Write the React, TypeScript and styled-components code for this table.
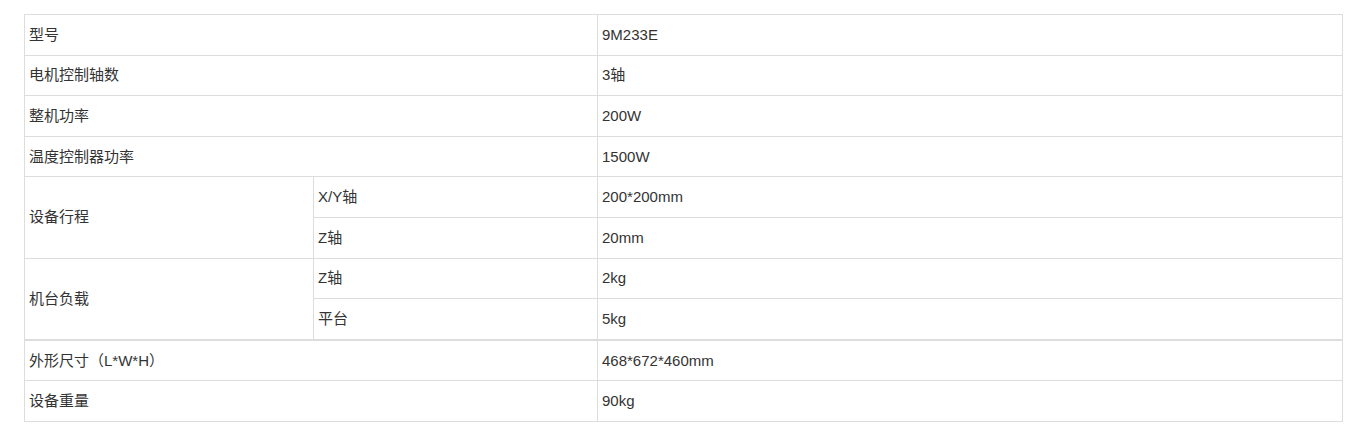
import styled, { createGlobalStyle } from "styled-components";

const GlobalStyle = createGlobalStyle`
  html, body {
    margin: 0;
    padding: 0;
    background: #fff;
  }
`;

const Page = styled.div`
  padding: 14px 19px 14px 24px;
  font-family: "Liberation Sans", Arial, "Noto Sans CJK SC", sans-serif;
  font-size: 15px;
  color: #333;
`;

const SpecTable = styled.table`
  width: 1319px;
  border-collapse: collapse;
  table-layout: fixed;
`;

const Cell = styled.td`
  height: 39.6px;
  padding: 0 4px;
  border: 1px solid #ddd;
  vertical-align: middle;
  text-align: left;
  line-height: 20px;
`;

const App = () => {
  return (
    <Page>
      <GlobalStyle />
      <SpecTable>
        <colgroup>
          <col style={{ width: 289 }} />
          <col style={{ width: 284 }} />
          <col />
        </colgroup>
        <tbody>
          <tr>
            <Cell colSpan={2}>型号</Cell>
            <Cell>9M233E</Cell>
          </tr>
          <tr>
            <Cell colSpan={2}>电机控制轴数</Cell>
            <Cell>3轴</Cell>
          </tr>
          <tr>
            <Cell colSpan={2}>整机功率</Cell>
            <Cell>200W</Cell>
          </tr>
          <tr>
            <Cell colSpan={2}>温度控制器功率</Cell>
            <Cell>1500W</Cell>
          </tr>
          <tr>
            <Cell rowSpan={2}>设备行程</Cell>
            <Cell>X/Y轴</Cell>
            <Cell>200*200mm</Cell>
          </tr>
          <tr>
            <Cell>Z轴</Cell>
            <Cell>20mm</Cell>
          </tr>
          <tr>
            <Cell rowSpan={2}>机台负载</Cell>
            <Cell>Z轴</Cell>
            <Cell>2kg</Cell>
          </tr>
          <tr>
            <Cell>平台</Cell>
            <Cell>5kg</Cell>
          </tr>
        </tbody>
      </SpecTable>
      <SpecTable>
        <colgroup>
          <col style={{ width: 573 }} />
          <col />
        </colgroup>
        <tbody>
          <tr>
            <Cell>外形尺寸（L*W*H）</Cell>
            <Cell>468*672*460mm</Cell>
          </tr>
          <tr>
            <Cell>设备重量</Cell>
            <Cell>90kg</Cell>
          </tr>
        </tbody>
      </SpecTable>
    </Page>
  );
};

export default App;
